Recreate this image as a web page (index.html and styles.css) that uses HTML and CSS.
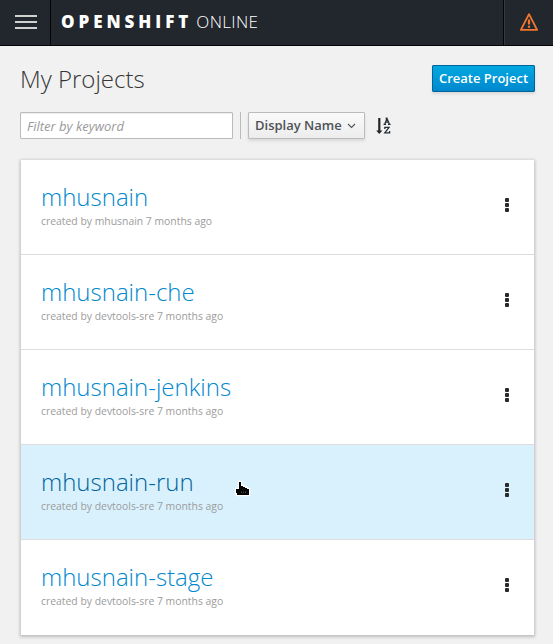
FILE: index.html
```html
<!DOCTYPE html>
<html lang="en">
<head>
<meta charset="utf-8">
<title>My Projects</title>
<link rel="stylesheet" href="styles.css">
</head>
<body>
<header class="navbar">
  <button class="menu-toggle" aria-label="Menu"><span></span><span></span><span></span></button>
  <div class="brand"><span class="brand-name">OPENSHIFT</span><span class="brand-edition">ONLINE</span></div>
  <div class="status">
    <svg width="18" height="18" viewBox="0 0 18 18" fill="none" stroke="#f4772e" stroke-width="1.8" stroke-linejoin="round"><path d="M9 1.1 17.1 16.9H.9Z"/><path d="M9 6.4v5M9 12.7v2" stroke-width="2.2"/></svg>
  </div>
</header>
<main class="page">
  <div class="heading">
    <h1>My Projects</h1>
    <button class="btn-primary">Create Project</button>
  </div>
  <div class="toolbar">
    <input class="filter" type="text" placeholder="Filter by keyword">
    <span class="divider"></span>
    <button class="btn-sort"><span>Display Name</span><svg width="9" height="6" viewBox="0 0 9 6" fill="none" stroke="#4d5258" stroke-width="1.1"><path d="M1 1l3.5 3.5L8 1"/></svg></button>
    <svg class="sort-icon" width="16" height="18" viewBox="0 0 16 18"><path d="M2.2 1h2.2v12.5h2L3.3 17 .2 13.5h2z" fill="#252525"/><g fill="none" stroke="#292e34" stroke-width="1.3"><path d="M8.7 7.2 11 1.5 13.4 7.2M9.7 5.2h2.8M7.5 7.4h2.6M12 7.4h2.6M9.6 1.5H11"/><path d="M8.8 12v-1.7h4.2L8.8 15.9h4.8v-1.8"/></g></svg>
  </div>
  <ul class="projects">
    <li class="project"><div><h2>mhusnain</h2><p>created by mhusnain 7 months ago</p></div><span class="kebab"><i></i><i></i><i></i></span></li>
    <li class="project"><div><h2>mhusnain-che</h2><p>created by devtools-sre 7 months ago</p></div><span class="kebab"><i></i><i></i><i></i></span></li>
    <li class="project"><div><h2>mhusnain-jenkins</h2><p>created by devtools-sre 7 months ago</p></div><span class="kebab"><i></i><i></i><i></i></span></li>
    <li class="project active"><div><h2>mhusnain-run</h2><p>created by devtools-sre 7 months ago</p></div><span class="kebab"><i></i><i></i><i></i></span>
      <svg class="pointer" width="18" height="18" viewBox="0 0 18 18"><path d="M5 2H7V6H9V7H11V8H13V9H15V15H3V13H2V9H5Z" fill="#050505" stroke="#fff" stroke-width="2.4" stroke-linejoin="round" paint-order="stroke"/><path d="M7.5 11.5v1.5M9.5 11.5v1.5M11.5 11.5v1.5" stroke="#555" stroke-width=".8"/></svg>
    </li>
    <li class="project"><div><h2>mhusnain-stage</h2><p>created by devtools-sre 7 months ago</p></div><span class="kebab"><i></i><i></i><i></i></span></li>
  </ul>
</main>
</body>
</html>
```
FILE: styles.css
```css
* { box-sizing: border-box; }
body { margin: 0; height: 644px; overflow: hidden; background: #f1f1f1; color: #363636; font-family: "Open Sans", sans-serif; font-size: 13px; }
button, input { font-family: inherit; margin: 0; }
h1, h2, p, ul { margin: 0; padding: 0; }

.navbar { display: flex; height: 46px; background: #22262d; border-bottom: 1px solid #050505; }
.menu-toggle { display: flex; flex-direction: column; gap: 4px; width: 51px; padding: 15px 0 0 15px; background: none; border: 0; border-right: 1px solid #050505; }
.menu-toggle span { width: 22px; height: 2px; background: #d1d1d1; }
.brand { display: flex; flex: 1; gap: 4px; padding-left: 10px; color: #fff; font-size: 17px; line-height: 43px; }
.brand-name { font-weight: 800; letter-spacing: 3.95px; }
.brand-edition { font-weight: 300; letter-spacing: .35px; }
.status { width: 50px; padding: 13px 0 0 16px; border-left: 1px solid #050505; box-shadow: inset 1px 0 #353a41; }

.page { padding: 18px 19px 0 20px; }
.heading { display: flex; justify-content: space-between; height: 48px; }
h1 { font-size: 24px; font-weight: 300; line-height: 29px; }
.btn-primary { width: 103px; height: 27px; padding: 0; margin: 1px -1px 0 0; color: #fff; font-size: 13px; font-weight: 600; line-height: 23px; white-space: nowrap; background: linear-gradient(#00a8e1, #0088ce); border: 1px solid #00659c; border-radius: 1px; box-shadow: 0 2px 3px rgba(3, 3, 3, .1); }
.toolbar { display: flex; height: 48px; align-items: flex-start; }
.filter { width: 213px; height: 27px; padding: 0 6px 0 6px; background: #fff; border: 1px solid #bbb; border-radius: 1px; box-shadow: inset 0 1px 1px rgba(3, 3, 3, .075); font-size: 13px; }
.filter::placeholder { color: #999; font-style: italic; }
.divider { width: 1px; height: 27px; margin: 0 7px; background: #bbb; }
.btn-sort { display: flex; align-items: center; gap: 5px; width: 117px; height: 27px; padding: 0 6px; color: #4d5258; font-size: 13px; font-weight: 600; white-space: nowrap; background: linear-gradient(#fafafa, #ededed); border: 1px solid #bbb; border-radius: 1px; box-shadow: 0 2px 3px rgba(3, 3, 3, .1); }
.btn-sort span { padding-bottom: 2px; }
.sort-icon { margin: 5px 0 0 11px; }

.projects { width: 513px; margin-left: 1px; list-style: none; background: #fff; box-shadow: 0 1px 3px 1px rgba(3, 3, 3, .22); }
.project { position: relative; display: flex; justify-content: space-between; height: 95px; padding: 21px 25px 0 20px; border-bottom: 1px solid #ddd; }
.project:last-child { border-bottom: 0; }
.project.active { background: #d8f1fd; }
h2 { color: #0088ce; font-size: 24px; font-weight: 300; line-height: 32px; }
.active h2 { color: #00659c; }
.project p { color: #9c9c9c; font-size: 10.4px; line-height: 17px; }
.kebab { display: flex; flex-direction: column; gap: 1px; padding-top: 17px; }
.kebab i { width: 4px; height: 4px; background: #292929; border-radius: 1px; }
.pointer { position: absolute; left: 213px; top: 35px; }
```
